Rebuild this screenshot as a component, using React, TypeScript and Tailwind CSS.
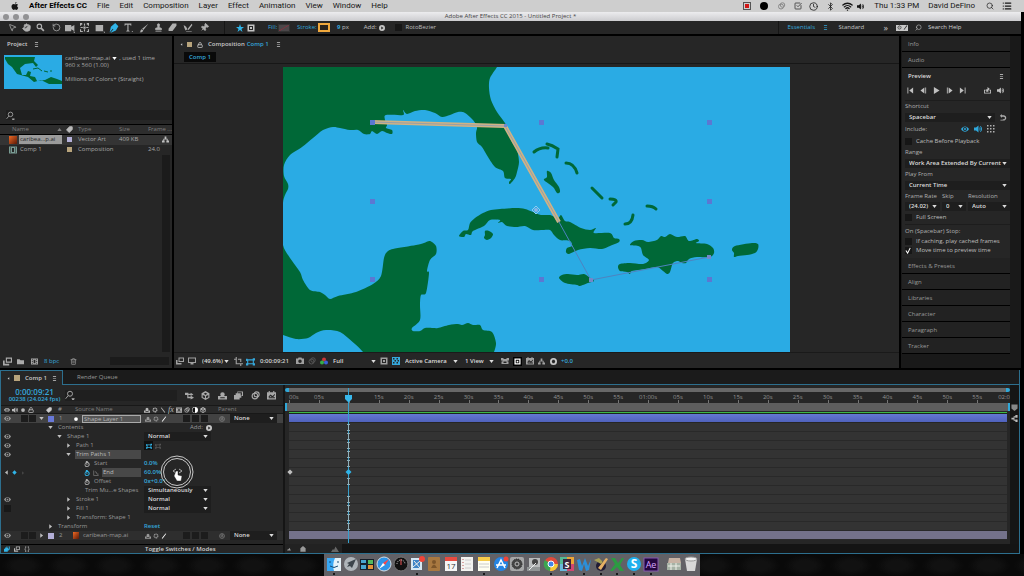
import type { ReactNode } from 'react';
import {
  Bluetooth,
  CheckSquare,
  Clock,
  Hand,
  List,
  Lock,
  MousePointer2,
  Pin,
  RotateCcw,
  Search,
  Stamp,
  Tag,
  Trash2,
  Wifi,
} from 'lucide-react';

type Point = [number, number];

// Closed Catmull-Rom curve through a flat list of coordinates
function curve(coords: number[]) {
  const pts: Point[] = [];
  for (let i = 0; i < coords.length; i += 2) pts.push([coords[i], coords[i + 1]]);
  const n = pts.length;
  let d = `M${pts[0][0]} ${pts[0][1]}`;
  for (let i = 0; i < n; i++) {
    const [a, b, c, e] = [pts[(i + n - 1) % n], pts[i], pts[(i + 1) % n], pts[(i + 2) % n]];
    d += `C${b[0] + (c[0] - a[0]) / 7} ${b[1] + (c[1] - a[1]) / 7} ${c[0] - (e[0] - b[0]) / 7} ${c[1] - (e[1] - b[1]) / 7} ${c[0]} ${c[1]}`;
  }
  return d + 'Z';
}

const mainland = [
  276, 60, 390, 60, 500, 60, 497, 67, 490, 78, 489, 88, 491, 100, 497, 112, 505, 123, 507, 129, 512, 142, 517, 150,
  519, 162, 517, 172, 515, 178, 510, 184, 509, 182, 511, 179, 505, 178, 503, 171, 495, 167, 488, 157, 482, 147, 477, 142,
  476, 133, 477, 127, 473, 120, 465, 113, 458, 112, 450, 115, 442, 117, 435, 113, 425, 110, 415, 111, 407, 114, 403, 110,
  403, 115, 386, 115, 385, 120, 387, 125, 386, 128, 392, 130, 392, 134, 387, 133, 382, 131, 377, 134, 372, 131, 370, 134,
  364, 134, 358, 130, 350, 130, 340, 128, 333, 127, 323, 130, 313, 138, 302, 147, 290, 155, 284, 165, 284, 176, 288, 184,
  288, 189, 285, 195, 283, 203, 283, 225, 283, 245, 290, 258, 300, 272, 303, 280, 310, 290, 320, 292, 325, 295, 330, 299,
  338, 296, 356, 292, 373, 284, 381, 276, 384, 258, 387, 252, 393, 249, 416, 245, 424, 243, 430, 241, 436, 246, 436, 254,
  430, 260, 427, 271, 429, 273, 426, 293, 421, 295, 420, 305, 420, 320, 412, 328, 413, 331, 420, 331, 425, 328, 433, 328,
  438, 328, 449, 325, 458, 324, 462, 325, 468, 323, 473, 325, 480, 325, 483, 330, 492, 332, 496, 343, 494, 352, 490, 360,
  440, 362, 372, 362, 363, 352, 355, 344, 340, 332, 326, 330, 316, 333, 308, 338, 296, 339, 283, 335, 272, 330, 270, 200,
];

const islands = [
  // Cuba
  [459, 236, 463, 231, 468, 230, 470, 223, 475, 218, 483, 213, 491, 210, 500, 209, 516, 208, 525, 209, 533, 212, 541, 215, 550, 215, 558, 218, 561, 215, 565, 221, 570, 222, 581, 228, 590, 230, 596, 228, 594, 233, 610, 233, 614, 238, 619, 239, 619, 242, 610, 246, 602, 249, 590, 248, 578, 250, 569, 254, 566, 252, 567, 248, 572, 246, 570, 241, 560, 240, 554, 235, 550, 230, 541, 230, 533, 230, 525, 226, 516, 227, 507, 226, 502, 222, 498, 223, 500, 220, 490, 220, 484, 226, 473, 231, 471, 235, 466, 234, 464, 237],
  [485, 231, 489, 231, 493, 234, 491, 238, 487, 240, 484, 238, 485, 235],
  // Jamaica
  [559, 278, 562, 275, 568, 274, 577, 275, 584, 274, 589, 277, 594, 281, 588, 283, 580, 286, 577, 285, 565, 283],
  // Hispaniola
  [630, 245, 634, 241, 642, 240, 648, 242, 657, 240, 661, 236, 665, 237, 670, 234, 677, 237, 685, 236, 689, 241, 697, 239, 699, 241, 696, 243, 707, 244, 713, 248, 714, 253, 710, 257, 697, 257, 689, 259, 686, 263, 682, 263, 678, 261, 673, 263, 670, 272, 667, 274, 663, 271, 657, 267, 645, 269, 632, 271, 630, 274, 627, 272, 620, 271, 618, 267, 620, 264, 630, 263, 643, 264, 649, 260, 643, 255, 641, 248, 638, 246],
  // Puerto Rico
  [732, 250, 735, 246, 752, 243, 758, 244, 758, 249, 755, 253, 747, 255, 738, 256, 734, 257, 734, 253],
  // Andros
  [544, 180, 547, 177, 547, 171, 551, 173, 554, 180, 559, 187, 560, 192, 557, 193, 553, 187],
];

const cays = [
  'M534 152Q540 147 548 148',
  'M547 144Q552 145 558 149L557 157',
  'M566 163Q574 163 577 173',
  'M592 188Q597 193 602 198',
  'M610 199Q617 199 616 202L613 205',
  'M625 224Q632 224 633 215',
  'M647 206Q653 206 656 209',
];

const handles: Point[] = [
  [372, 122], [541, 122], [709, 122], [372, 201], [709, 201], [372, 279], [541, 279], [709, 279],
];

function CaribbeanMap() {
  return (
    <svg viewBox="283 67 507 285" className="h-[285px] w-[507px]" role="img" aria-label="Caribbean map">
      <rect x="283" y="67" width="507" height="285" fill="#2aabe4" />
      <g fill="#006837">
        <path d={curve(mainland)} />
        {islands.map((c, i) => <path key={i} d={curve(c)} />)}
      </g>
      <g fill="none" stroke="#006837" strokeWidth="3" strokeLinecap="round">
        {cays.map(d => <path key={d} d={d} />)}
      </g>
      <path d="M559 222L591 280L709 257" fill="none" stroke="#4e83c0" />
      <path d="M372 122L505 126L559 222" fill="none" stroke="#cfb285" strokeWidth="4" />
      <path d="M372 122L505 126L559 222" fill="none" stroke="#96a0a8" />
      <path d="M536 206l4 4-4 4-4-4z" fill="none" stroke="#8cc8f0" />
      <circle cx="536" cy="210" r="2" fill="#8cb4e6" />
      {handles.map(([x, y]) => <rect key={`${x}-${y}`} x={x - 2} y={y - 2} width="5" height="5" fill="#5b78d2" />)}
      <g fill="#7487c8"><rect x="504" y="124" width="3" height="3" /><rect x="589" y="278" width="4" height="4" /><rect x="707" y="255" width="4" height="4" /></g>
    </svg>
  );
}

const shapes: Record<string, ReactNode> = {
  apple: <path d="M11 0c0 2-1.500 3.300-3 3.300C8 1.600 9.300.300 11 0zM8 4.500c1 0 1.600-.7 3-.7 1.300 0 2.300.7 3 1.700-2.500 1.500-2 4.800.5 5.800-.8 2-2 4.500-3.500 4.500-1.200 0-1.500-.7-3-.7s-1.900.7-3 .7C3.300 15.800 1 12 1 9c0-3 2-5.200 4-5.200 1.300 0 2.200.7 3 .7z" />,
  zoom: <><circle cx="6" cy="6" r="4" fill="none" stroke="currentColor" strokeWidth="2" /><path d="M9 9l5 5" stroke="currentColor" strokeWidth="3" /></>,
  camera: <path d="M0 3h10v3l5-3v10l-5-3v3H0zM12 14h4v2z" />,
  pan: <path d="M6 6h4v4H6zM0 0h4v3H2v2H0zM12 0h4v5h-2V3h-2zM0 11h2v3h3v2H0zM14 11h2v5h-4v-2h2zM7 1h2v4H7zM7 11h2v4H7zM1 7h4v2H1zM11 7h4v2h-4z" />,
  rect: <path d="M1 3h12v10H1zM13 14h3v2z" />,
  pen: <path d="M10 0l5 5-4 7-9 4 5-6-1-1-5 6 2-9z" />,
  text: <path d="M1 1h12v4h-1l-1-2H8v10l2 1v1H4v-1l2-1V3H3L2 5H1zM13 14h3v2z" />,
  brush: <path d="M15 1L7 11 5 9zM4 10l3 2c-1 3-4 3-6 3 2-1 1-4 3-5z" />,
  eraser: <path d="M8 1h7v4l-7 9H1v-4z" />,
  roto: <path d="M1 3l4 3 2 4-3 2-2-5zM14 1l1 2-6 8-2-1zM5 13h9v1H5z" />,
  star: <path d="M8 0l2 6h6l-5 4 2 6-5-4-5 4 2-6-5-4h6z" />,
  boxed: <path fillRule="evenodd" d="M1 1h14v14H1zM4 4v8h8V4zM6 6h4v4H6z" />,
  plus: <path fillRule="evenodd" d="M8 0a8 8 0 100 16A8 8 0 008 0zM6 4l6 4-6 4z" />,
  menu: <path d="M3 1h10v2H3zM3 7h10v2H3zM3 13h10v2H3z" />,
  down: <path d="M1 3h14L8 13z" />,
  right: <path d="M4 1l9 7-9 7z" />,
  left: <path d="M12 1L3 8l9 7z" />,
  first: <path d="M1 1h2v14H1zM14 1v14L5 8z" />,
  prev: <path d="M10 1v14L1 8zM12 1h2v14h-2z" />,
  play: <path d="M2 0l13 8-13 8z" />,
  next: <path d="M2 1h2v14H2zM6 1l9 7-9 7z" />,
  last: <path d="M13 1h2v14h-2zM2 1l9 7-9 7z" />,
  share: <path d="M0 6h4v2H2v5h12V8h-2V6h4v9H0zM5 5h3V0l5 4-3 4v3H5z" />,
  speaker: <path d="M0 5h4l5-4v14l-5-4H0zM11 4c3 2 3 6 0 8V9V7zM13 2c4 3 4 9 0 12l-1-1c3-3 3-7 0-10z" />,
  eye: <path fillRule="evenodd" d="M0 8c4-7 12-7 16 0-4 7-12 7-16 0zM8 4a4 4 0 100 8 4 4 0 000-8zM8 6a2 2 0 110 4 2 2 0 010-4z" />,
  grid: <path d="M0 0h3v3H0zM6 0h3v3H6zM12 0h3v3h-3zM0 6h3v3H0zM6 6h3v3H6zM12 6h3v3h-3zM0 12h3v3H0zM6 12h3v3H6zM12 12h3v3h-3z" />,
  undo: <path d="M4 0v3h5a6 6 0 11-4 11l2-2a3 3 0 102-6H4v3L0 4zM1 13h7v2H1z" />,
  find: <><circle cx="8" cy="6" r="4" fill="none" stroke="currentColor" strokeWidth="1.500" /><path d="M5 9l-4 5M11 14h4l-2 2z" stroke="currentColor" strokeWidth="1.500" /></>,
  tree: <path d="M6 1h4v5h3v4h3v5h-6v-5h1V8H5v2h1v5H0v-5h3V6h3z" />,
  flow: <path d="M0 3h6v2h4V3l5 3-5 3V7H6v3h4V8l6 4-6 3v-2H4V7H0z" />,
  film: <path fillRule="evenodd" d="M0 1h16v14H0zM2 3v2h2V3zM2 7v2h2V7zM2 11v2h2v-2zM12 3v2h2V3zM12 7v2h2V7zM12 11v2h2v-2zM6 4v8h4V4z" />,
  folder: <path d="M0 3h6l2 2h8v9H0z" />,
  stack: <path fillRule="evenodd" d="M5 1h11v9H5zM7 3v5h7V3zM0 6h3v6h8v3H0z" />,
  layers: <path d="M6 1h10v8h-3v3h-3v3H0V7h3V4h3zM7 2v2h5v4h2V2z" fillRule="evenodd" />,
  screen: <path fillRule="evenodd" d="M0 1h16v11h-5v3H5v-3H0zM2 3v7h12V3z" />,
  crop: <path d="M3 0h2v11h11v2h-3v3h-2v-3H3V5H0V3h3zM7 3h6v6h-2V5H7z" />,
  mask: <path d="M0 3h3v1h9V2h4v4h-2v5h2v4h-4v-2H4v2H0v-4h2V7H0zM4 6v5h8V6z" fillRule="evenodd" />,
  snap: <path fillRule="evenodd" d="M0 3h4l1-2h6l1 2h4v11H0zM8 5a3 3 0 100 7 3 3 0 000-7z" />,
  checker: <path d="M0 0h16v16H0zM2 2v3h3V2zM9 2v3h3V2zM5 6v3h3V6zM11 6v3h3V6zM2 10v3h3v-3zM9 10v3h3v-3z" fillRule="evenodd" />,
  shy: <path d="M4 6a4 4 0 118 0l-1 3h5v6H0V9h5zM4 11v2h8v-2z" fillRule="evenodd" />,
  cube: <path fillRule="evenodd" d="M8 0l7 4v8l-7 4-7-4V4zM8 3L5 5l3 2 3-2zM3 7v4l4 2V9zM13 7v4l-4 2V9z" />,
  rings: <><circle cx="10" cy="6" r="4.500" fill="none" stroke="currentColor" strokeWidth="2" /><circle cx="7" cy="9" r="5" fill="none" stroke="currentColor" strokeWidth="2" /></>,
  graph: <path fillRule="evenodd" d="M0 2h3V0h2v2h6V0h2v2h3v13H0zM2 11l4-5 4 3 4-4v2l-4 5-4-3-3 4h11v-2H2z" />,
  view: <path d="M0 2h5v2h6V2h5v5h-3v2h2v5H1V9h2V7H0zM5 9v3h6V9z" fillRule="evenodd" />,
  gear: <><circle cx="8" cy="8" r="5" fill="none" stroke="currentColor" strokeWidth="3" strokeDasharray="3 1" /><circle cx="8" cy="8" r="1" /></>,
  shutter: <path fillRule="evenodd" d="M8 0a8 8 0 100 16A8 8 0 008 0zM6 4h4l2 4-2 4H6L4 8z" />,
  slash: <path d="M12 1l2 1L4 15l-2-1z" />,
  backslash: <path d="M2 2l2-1 10 13-2 1z" />,
  dot: <circle cx="8" cy="8" r="5" />,
  half: <><circle cx="8" cy="8" r="8" fill="#fff" /><path d="M8 1a7 7 0 000 14z" fill="#111" /></>,
  spiral: <><circle cx="8" cy="8" r="6.500" fill="none" stroke="currentColor" strokeWidth="1.500" /><path d="M8 8c0-2 4-1 3 1s-6 2-6-1 3-4 6-3" fill="none" stroke="currentColor" strokeWidth="1.500" /></>,
  watch: <path fillRule="evenodd" d="M5 0h5v2l4 3c3 6 0 11-6 11S0 10 3 5l2-2zM8 5a4 4 0 100 9 4 4 0 000-9zM5 6l4 2v3L7 10z" />,
  linegraph: <path d="M1 1h2v12h12v2H1zM5 4h3l4 6h3v2h-4L7 6H5z" />,
  diamond: <path d="M8 1l7 7-7 7-7-7z" />,
  brackets: <path fillRule="evenodd" d="M6 1v3H4v8h2v3H3V9H1V7h2V1zM10 1h3v6h2v2h-2v6h-3v-3h2V4h-2z" />,
  hill: <path d="M0 14l4-6 2 2 3-7 7 11z" />,
  marker: <path d="M1 1h14v9l-7 6-7-6z" />,
};

function Glyph({ name, className = 'size-2' }: { name: string; className?: string }) {
  return (
    <svg viewBox="0 0 16 16" fill="currentColor" className={`shrink-0 ${className}`} aria-hidden="true">
      {shapes[name]}
    </svg>
  );
}

function Drop({ label, value, className = '' }: { label: string; value: string; className?: string }) {
  return (
    <span className={`flex h-[9px] items-center bg-[#1e1e1e] pr-[3px] text-[#dcdcdc] ${className}`}>
      <select aria-label={label} className="h-[9px] min-w-0 flex-1 appearance-none bg-transparent p-0 pl-1 leading-[9px] font-semibold outline-none">
        <option>{value}</option>
      </select>
      <Glyph name="down" className="size-[5px]" />
    </span>
  );
}

function Check({ label, checked = false }: { label: string; checked?: boolean }) {
  return (
    <label className="flex items-center gap-1 text-[#bebebe]">
      <input type="checkbox" defaultChecked={checked} className="peer sr-only" />
      <span className="flex size-[7px] items-center justify-center bg-[#161616] text-white">
        {checked && <svg viewBox="0 0 8 8" className="size-[7px]"><path d="M1 4l2 3 3-6" fill="none" stroke="currentColor" strokeWidth="1.200" /></svg>}
      </span>
      {label}
    </label>
  );
}

const menus = ['File', 'Edit', 'Composition', 'Layer', 'Effect', 'Animation', 'View', 'Window', 'Help'];

function MenuBar() {
  return (
    <header className="flex h-3 items-center bg-[#cecece] pr-3 pl-[11px] font-['Roboto',sans-serif] text-[8px] leading-3 text-[#161616]">
      <Glyph name="apple" className="size-2" />
      <nav className="ml-[10px] flex gap-[10px]">
        <button className="font-bold text-black">After Effects CC</button>
        {menus.map(m => <button key={m}>{m}</button>)}
      </nav>
      <div className="ml-auto flex items-center">
        <span className="mr-[9px] flex size-2 items-center justify-center border border-[#555]"><i className="size-1 bg-[#d01818]" /></span>
        <span className="mr-[9px] size-2 rounded-full bg-black" />
        <Glyph name="rings" className="mr-2 h-2 w-[9px] text-[#888]" />
        <CheckSquare className="mr-[7px] size-2" />
        <Clock className="mr-2 size-[9px]" />
        <Bluetooth className="mr-[7px] size-[9px]" />
        <Wifi className="mr-1 size-[11px]" strokeWidth={3} />
        <Glyph name="speaker" className="mr-[10px] size-[7px]" />
        <span className="mr-[9px]">Thu 1:33 PM</span>
        <span className="mr-[11px]">David DeFino</span>
        <Search className="mr-2 size-2" />
        <List className="size-[10px]" strokeWidth={3} />
      </div>
    </header>
  );
}

function Tool({ children, label, active = false }: { children: ReactNode; label: string; active?: boolean }) {
  return <button aria-label={label} className={`flex w-[14px] justify-center ${active ? 'text-[#30b4e8]' : 'text-[#b0b0b0]'}`}>{children}</button>;
}

function Toolbar() {
  return (
    <div className="flex h-[15px] items-center border-b-2 border-black bg-[#262626] pl-[5px] text-[#c4c4c4]">
      <Tool label="Selection"><MousePointer2 className="size-[9px]" /></Tool>
      <Tool label="Hand"><Hand className="size-[9px]" fill="currentColor" /></Tool>
      <Tool label="Zoom"><Glyph name="zoom" className="size-[9px]" /></Tool>
      <span className="w-[2px]" />
      <Tool label="Rotation"><RotateCcw className="size-[9px]" /></Tool>
      <Tool label="Camera"><Glyph name="camera" className="size-[10px]" /></Tool>
      <Tool label="Pan Behind"><Glyph name="pan" className="size-[9px]" /></Tool>
      <span className="w-[2px]" />
      <Tool label="Rectangle"><Glyph name="rect" className="size-[10px]" /></Tool>
      <Tool label="Pen" active><Glyph name="pen" className="size-[10px]" /></Tool>
      <Tool label="Type"><Glyph name="text" className="size-[9px]" /></Tool>
      <span className="w-[2px]" />
      <Tool label="Brush"><Glyph name="brush" className="size-[10px]" /></Tool>
      <Tool label="Clone Stamp"><Stamp className="size-[9px]" fill="currentColor" /></Tool>
      <Tool label="Eraser"><Glyph name="eraser" className="size-[9px]" /></Tool>
      <span className="w-[2px]" />
      <Tool label="Roto Brush"><Glyph name="roto" className="size-[10px]" /></Tool>
      <span className="w-[2px]" />
      <Tool label="Puppet Pin"><Pin className="size-[9px] rotate-45" fill="currentColor" /></Tool>
      <span className="ml-[13px] h-[13px] w-px bg-[#161616]" />
      <Glyph name="star" className="ml-[11px] size-2 text-[#30b4e8]" />
      <Glyph name="boxed" className="ml-[3px] size-2" />
      <span className="ml-[13px] w-[10px] text-[#35a8dc]">Fill:</span>
      <button aria-label="Fill colour" className="h-2 w-3 border border-[#333] bg-[#4b4749]"><svg viewBox="0 0 10 6" className="size-full"><path d="M0 6L10 0" stroke="#7e3540" /></svg></button>
      <span className="ml-[7px] w-[21px] text-[#35a8dc]">Stroke:</span>
      <button aria-label="Stroke colour" className="h-[9px] w-3 border-2 border-[#f0a83c] bg-[#2b241c]" />
      <span className="ml-[7px]"><b className="text-[#35a8dc]">9</b> px</span>
      <span className="ml-[15px]">Add:</span>
      <Glyph name="plus" className="ml-[2px] size-[6px]" />
      <span className="ml-[10px]"><Check label="RotoBezier" /></span>
      <div className="ml-auto flex h-full items-center border-l border-[#161616] pl-[9px]">
        <button className="w-[35px] text-left text-[#35a8dc]">Essentials</button>
        <Glyph name="menu" className="size-[5px] text-[#35a8dc]" />
        <button className="ml-[11px] w-[45px] text-left">Standard</button>
        <span className="text-[9px] leading-[9px]">»</span>
        <span className="ml-2 flex h-[6px] w-3 items-center justify-center gap-px bg-[#c8c8c8] text-[#222]"><Glyph name="gear" className="size-[5px]" /><Glyph name="slash" className="size-[5px]" /></span>
        <Search className="ml-[7px] size-[7px] -scale-x-100" />
        <input aria-label="Search Help" placeholder="Search Help" className="ml-[6px] w-[93px] bg-transparent placeholder:text-[#d0d0d0]" />
      </div>
    </div>
  );
}

function ProjectPanel() {
  return (
    <section className="flex w-[172px] shrink-0 flex-col bg-[#262626] text-[#a8a8a8]">
      <h2 className="flex h-4 items-center gap-[7px] pt-px pl-[7px] font-semibold text-[#cccccc]">Project <Glyph name="menu" className="size-[5px]" /></h2>
      <div className="flex h-[58px] gap-[3px] pt-[3px] pl-1">
        <svg viewBox="0 0 58 34" className="h-[34px] w-[58px]">
          <rect width="58" height="34" fill="#2aabe4" />
          <path d="M1 2H31L30 6L34 10L32 12L29 8L21 9L16 13L18 20L22 20L24 16L27 17L26 21L31 22L33 26L41 25L47 22L53 24L58 26V29H45L37 25L30 27L24 22L13 19L8 12L4 9L1 4Z" fill="#006837" />
          <path d="M29 14L34 13L38 16M40 16L44 17M46 16h2" fill="none" stroke="#006837" />
        </svg>
        <div className="leading-[7px]">
          <p className="flex items-center gap-[2px] font-medium"><span>caribean-map.ai</span> <Glyph name="down" className="size-[5px] text-white" /> <span>, used 1 time</span></p>
          <p>960 x 560 (1.00)</p>
          <p className="mt-[7px]">Millions of Colors+ (Straight)</p>
        </div>
      </div>
      <label className="ml-[6px] flex h-[10px] items-center bg-[#1f1f1f]">
        <Glyph name="find" className="size-[9px]" />
        <input aria-label="Search project" className="w-[140px] bg-transparent" />
      </label>
      <table className="mt-1 w-full table-fixed border-t border-black text-left">
        <thead>
          <tr className="h-[10px] border-b border-black bg-[#2d2d2d] text-[#7e7e7e]">
            <th className="w-[66px] p-0 pl-3 font-normal"><span className="flex items-center justify-between pr-1">Name <Glyph name="down" className="size-[5px] rotate-180" /></span></th>
            <th className="w-3 p-0"><Tag className="size-[7px] -scale-x-100 text-[#bbb]" fill="currentColor" /></th>
            <th className="w-[41px] p-0 font-normal">Type</th>
            <th className="w-[29px] p-0 font-normal">Size</th>
            <th className="p-0 font-normal whitespace-nowrap">Frame ...</th>
          </tr>
        </thead>
        <tbody>
          <tr className="h-[10px] bg-[#343434]">
            <td className="p-0 pl-[9px]"><span className="flex items-center gap-[2px]"><i className="size-2 bg-linear-to-br from-[#f06a24] to-[#5c1a08]" /><span className="w-[43px] bg-[#9b9b9b] pl-px text-[#262626]">caribea...p.ai</span></span></td>
            <td className="p-0"><i className="ml-px block size-[5px] bg-[#b4b0d8]" /></td>
            <td className="p-0">Vector Art</td>
            <td className="p-0">409 KB</td>
            <td className="p-0"><Glyph name="tree" className="ml-[14px] size-[7px] text-[#c0c0c0]" /></td>
          </tr>
          <tr className="h-[10px]">
            <td className="p-0 pl-[9px]"><span className="flex items-center gap-[3px]"><Glyph name="film" className="size-2 text-[#789a92]" />Comp 1</span></td>
            <td className="p-0"><i className="ml-px block size-[5px] bg-[#b8a47c]" /></td>
            <td className="p-0">Composition</td>
            <td className="p-0" />
            <td className="p-0">24.0</td>
          </tr>
        </tbody>
      </table>
      <div className="mr-[2px] flex-1 self-stretch"><div className="ml-auto h-full w-2 bg-[#1b1b1b]" /></div>
      <div className="flex h-4 items-center gap-[5px] pt-[2px] pl-[3px] text-[#aaa]">
        <Glyph name="stack" className="size-[9px]" /><Glyph name="folder" className="size-[7px]" /><Glyph name="film" className="ml-px h-[7px] w-[9px]" />
        <button className="text-[#35a8dc]">8 bpc</button>
        <button aria-label="Delete" className="ml-[6px]"><Trash2 className="size-[7px]" /></button>
        <div className="mr-[3px] ml-[28px] h-2 flex-1 bg-[#1b1b1b]" />
      </div>
    </section>
  );
}

function CompositionPanel() {
  return (
    <section className="flex min-w-0 flex-1 flex-col border-x-2 border-black bg-[#262626] text-[#c8c8c8]">
      <h2 className="flex h-4 items-center pt-px pl-[6px] font-semibold">
        <Glyph name="left" className="size-[3px]" />
        <i className="ml-1 size-[5px] bg-[#b8a47c]" />
        <Lock className="ml-[5px] size-[6px]" strokeWidth={3} />
        <span className="ml-[5px]">Composition</span>
        <span className="ml-[2px] text-[#35a8dc]">Comp 1</span>
        <Glyph name="menu" className="ml-[7px] size-[5px]" />
      </h2>
      <div className="flex h-3 items-start border-b border-[#171717] pl-[10px]">
        <button className="h-[10px] w-8 bg-[#090909] font-semibold text-[#35a8dc]">Comp 1</button>
      </div>
      <div className="flex flex-1 items-start justify-center pt-[3px]"><CaribbeanMap /></div>
      <div className="flex h-4 items-center border-t border-[#1a1a1a] pt-px pl-[2px] text-[#a0a0a0]">
        <Glyph name="stack" /><Glyph name="screen" className="ml-1 size-2" />
        <Drop label="Magnification" value="(49.6%)" className="ml-[2px] w-[34px] bg-transparent!" />
        <Glyph name="crop" className="ml-[2px] size-[9px]" />
        <Glyph name="mask" className="ml-[3px] size-[9px] text-[#35a8dc]" />
        <span className="ml-[5px] w-9 font-semibold text-[#d0d0d0]">0:00:09:21</span>
        <Glyph name="snap" className="size-2" /><Glyph name="rings" className="ml-1 size-2 text-[#555]" />
        <svg viewBox="0 0 16 16" className="ml-1 size-2"><circle cx="8" cy="5" r="4" fill="#c83838" /><circle cx="4" cy="11" r="4" fill="#36ad48" /><circle cx="12" cy="11" r="4" fill="#3b61d8" /></svg>
        <Drop label="Resolution" value="Full" className="ml-px w-[50px] bg-transparent!" />
        <Glyph name="boxed" className="ml-px size-2" /><Glyph name="checker" className="ml-1 size-2 text-[#35a8dc]" />
        <Drop label="3D view" value="Active Camera" className="ml-px w-[60px] bg-transparent!" />
        <Drop label="View layout" value="1 View" className="w-9 bg-transparent!" />
        <div className="ml-1 flex items-center gap-1">
          <Glyph name="view" /><span className="flex size-[9px] items-center justify-center bg-black text-white"><Glyph name="boxed" className="size-[7px]" /></span>
          <Glyph name="graph" className="size-2" /><Glyph name="tree" className="size-[7px]" /><Glyph name="shutter" className="ml-px size-[7px] text-[#c8c8c8]" />
          <span className="font-semibold text-[#35a8dc]">+0.0</span>
        </div>
      </div>
    </section>
  );
}

function Tab({ children }: { children: ReactNode }) {
  return <button className="block h-4 w-full border-b border-black bg-[#222] pt-px pl-[6px] text-left text-[#9a9a9a]">{children}</button>;
}

function SidePanel() {
  return (
    <aside className="flex w-[120px] shrink-0 bg-[#191919] pl-px">
      <div className="w-[108px]">
        <Tab>Info</Tab>
        <Tab>Audio</Tab>
        <div className="bg-[#262626] pl-[3px] text-[#b0b0b0]">
          <h2 className="flex h-4 items-center justify-between pr-[6px] pl-[3px] font-semibold text-[#dcdcdc]">Preview <Glyph name="menu" className="size-[5px]" /></h2>
          <div className="flex h-[17px] items-start gap-[6px] border-b border-[#1d1d1d] pt-[3px] pl-[2px] text-[#c0c0c0]">
            {['first', 'prev', 'play', 'next', 'last'].map(n => <button key={n} aria-label={n}><Glyph name={n} className="size-[7px]" /></button>)}
            <button aria-label="Loop" className="ml-3"><Glyph name="share" className="size-[7px]" /></button>
            <button aria-label="Mute"><Glyph name="speaker" className="size-[7px]" /></button>
          </div>
          <div className="h-[11px] pt-px">Shortcut</div>
          <div className="flex h-[11px] items-center gap-[5px]"><Drop label="Shortcut" value="Spacebar" className="w-[90px]" /><Glyph name="undo" className="size-[7px]" /></div>
          <div className="flex h-3 items-center">
            <span className="w-[56px]">Include:</span>
            <Glyph name="eye" className="size-2 text-[#2fa8dc]" /><Glyph name="speaker" className="ml-[5px] size-2 text-[#2fa8dc]" /><Glyph name="grid" className="ml-[5px] size-2" />
          </div>
          <div className="flex h-3 items-center"><Check label="Cache Before Playback" /></div>
          <div className="h-[11px] pt-px">Range</div>
          <Drop label="Range" value="Work Area Extended By Current" className="my-px" />
          <div className="h-[11px] pt-px">Play From</div>
          <Drop label="Play From" value="Current Time" className="my-px" />
          <div className="grid grid-cols-[37px_26px_1fr] leading-[10px]"><span>Frame Rate</span><span>Skip</span><span>Resolution</span></div>
          <div className="grid grid-cols-[37px_26px_1fr] py-px">
            <Drop label="Frame Rate" value="(24.02)" className="mr-[2px]" /><Drop label="Skip" value="0" className="mr-[2px]" /><Drop label="Preview resolution" value="Auto" />
          </div>
          <div className="flex h-[10px] items-center"><Check label="Full Screen" /></div>
          <div className="mt-[2px] h-3 border-t border-[#1d1d1d] pt-[2px]">On (Spacebar) Stop:</div>
          <div className="flex h-[10px] items-center"><Check label="If caching, play cached frames" /></div>
          <div className="flex h-3 items-start"><Check label="Move time to preview time" checked /></div>
        </div>
        {['Effects & Presets', 'Align', 'Libraries', 'Character', 'Paragraph', 'Tracker'].map(t => <Tab key={t}>{t}</Tab>)}
      </div>
    </aside>
  );
}

function Arrow({ open }: { open: boolean }) {
  return <button aria-label={open ? 'Collapse' : 'Expand'} className="mr-1 text-[#c0c0c0]"><Glyph name={open ? 'down' : 'right'} className="size-[5px]" /></button>;
}

function Row({ eye, indent, name, value, selected = false, lead }: { eye?: ReactNode; indent: string; name: string; value?: ReactNode; selected?: boolean; lead?: ReactNode }) {
  return (
    <div className="relative flex h-[9px] items-center">
      <span className="flex w-[34px] items-center pl-[3px]">{eye}</span>
      <span className={`flex w-[109px] items-center pr-[3px] ${indent}`}>
        {lead}
        <span className={`pl-px ${selected ? 'flex-1 bg-[#484848] text-[#bcbcbc]' : ''}`}>{name}</span>
      </span>
      <span className="flex flex-1 items-center">{value}</span>
    </div>
  );
}

function Layer({ index, name, color, active = false }: { index: number; name: string; color: string; active?: boolean }) {
  return (
    <div className={`flex h-[9px] items-center ${active ? 'bg-[#424242]' : 'bg-[#2e2e2e]'}`}>
      <span className="flex w-[38px] items-center gap-px pl-[3px]"><Glyph name="eye" className="mr-[9px] size-[7px]" /><i className="size-[7px] bg-[#1c1c1c]" /><i className="size-[7px] bg-[#1c1c1c]" /></span>
      <Arrow open={active} />
      <i className={`mr-[5px] size-[6px] ${color}`} />
      <span className="w-[14px]">{index}</span>
      {active
        ? <><Glyph name="dot" className="mr-[3px] size-[6px] text-white" /><span className="h-2 w-[59px] border border-[#aaa] bg-[#565656] pl-px leading-[6px] text-[#b4b4b4]">{name}</span></>
        : <><i className="mr-[3px] h-[7px] w-[6px] bg-linear-to-br from-[#f06a24] to-[#5c1a08]" /><span className="w-[59px] pl-px">{name}</span></>}
      <span className="ml-1 flex items-center gap-[2px]"><Glyph name="shy" className="size-[6px]" /><Glyph name="gear" className="size-[6px]" /><Glyph name="slash" className="size-[6px] text-white" /></span>
      <span className="ml-[16px] flex gap-[2px]">{[0, 1, 2].map(i => <i key={i} className="size-[7px] bg-[#1c1c1c]" />)}</span>
      <Glyph name="spiral" className="ml-[11px] size-[6px]" />
      <Drop label={`${name} parent`} value="None" className="ml-[5px] w-[47px]" />
    </div>
  );
}

const eyeIcon = <Glyph name="eye" className="size-[7px]" />;
const cyan = 'text-[#35a8dc] font-semibold';

function LayerList() {
  return (
    <div className="w-[284px] shrink-0 border-r-2 border-[#151515] text-[#989898]">
      <div className="flex h-5 items-center pl-[3px]">
        <div className="w-[61px] text-center font-semibold text-[#35a8dc]">
          <div className="text-[8px] leading-[9px]">0:00:09:21</div>
          <div className="leading-[7px]">00238 (24.024 fps)</div>
        </div>
        <label className="flex h-[11px] items-center bg-[#1f1f1f] text-[#aaa]"><Glyph name="find" className="size-[10px]" /><input aria-label="Search layers" className="w-[102px] bg-transparent" /></label>
        <div className="ml-2 flex flex-1 items-center justify-between pr-[7px] text-[#a8a8a8]">
          {['flow', 'cube', 'shy', 'layers', 'rings', 'graph'].map(n => <button key={n} aria-label={n}><Glyph name={n} className="size-[9px]" /></button>)}
        </div>
      </div>
      <div className="flex h-[9px] items-center border-y border-[#181818] bg-[#2a2a2a] pl-[3px]">
        <span className="flex w-[42px] items-center gap-[2px] text-[#b8b8b8]"><Glyph name="eye" className="size-[6px]" /><Glyph name="speaker" className="size-[6px]" /><Glyph name="dot" className="size-[6px]" /><Lock className="size-[6px]" strokeWidth={3} /></span>
        <Tag className="size-[6px] -scale-x-100 text-[#ccc]" fill="currentColor" />
        <span className="ml-[6px] w-[17px]">#</span>
        <span className="w-[69px] text-[#7e7e7e]">Source Name</span>
        <span className="flex w-[74px] items-center gap-[2px] text-[#b8b8b8]">
          <Glyph name="shy" className="size-[6px]" /><Glyph name="gear" className="size-[6px]" /><Glyph name="backslash" className="size-[6px]" /><i className="w-[6px] font-['Liberation_Serif',serif] text-[8px] leading-[7px]">fx</i><Glyph name="film" className="size-[6px]" /><Glyph name="rings" className="size-[6px]" /><Glyph name="half" className="size-[6px]" /><Glyph name="cube" className="size-[6px]" />
        </span>
        <span className="text-[#7e7e7e]">Parent</span>
      </div>
      <Layer index={1} name="Shape Layer 1" color="bg-[#6878d8]" active />
      <Row indent="pl-[13px]" lead={<Arrow open />} name="Contents" value={<span className="ml-[46px] flex items-center gap-[3px]">Add: <Glyph name="plus" className="size-[6px] text-[#c8c8c8]" /></span>} />
      <Row eye={eyeIcon} indent="pl-[22px]" lead={<Arrow open />} name="Shape 1" value={<Drop label="Shape 1 mode" value="Normal" className="w-[67px]" />} />
      <Row eye={eyeIcon} indent="pl-[31px]" lead={<Arrow open={false} />} name="Path 1" value={<><span className="flex size-[9px] items-center justify-center bg-[#101010] text-[#30b4e8]"><Glyph name="mask" className="size-[6px]" /></span><Glyph name="mask" className="ml-[2px] size-[6px] text-[#555]" /></>} />
      <Row eye={eyeIcon} indent="pl-[31px]" lead={<Arrow open />} name="Trim Paths 1" selected />
      <Row indent="pl-[49px]" lead={<Glyph name="watch" className="mr-[3px] size-[6px] text-[#aaa]" />} name="Start" value={<button className={cyan}>0.0%</button>} />
      <Row
        eye={<><Glyph name="left" className="mr-[3px] size-[5px] text-[#bbb]" /><Glyph name="diamond" className="mr-1 size-[5px] text-[#30b4e8]" /><Glyph name="right" className="size-1 text-[#444]" /></>}
        indent="pl-[49px]"
        lead={<><Glyph name="watch" className="mr-[3px] size-[6px] text-[#30b4e8]" /><Glyph name="linegraph" className="mr-[3px] size-[6px] text-[#777]" /></>}
        name="End"
        selected
        value={
          <>
            <button className={cyan}>60.0%</button>
            <svg viewBox="0 0 34 34" className="absolute -top-[13px] left-[159px] z-10 size-[34px]" aria-hidden="true">
              <g fill="none" stroke="#c8c8c8"><circle cx="17" cy="17" r="16" /><circle cx="17" cy="17" r="13.500" /><path d="M16 14l-3 2 3 2M19 14l3 2-3 2" stroke="#aaa" /></g>
              <path d="M16 16h2v4l4 1-1 5h-4l-3-5z" fill="#fff" stroke="#111" strokeWidth=".4" />
            </svg>
          </>
        }
      />
      <Row indent="pl-[49px]" lead={<Glyph name="watch" className="mr-[3px] size-[6px] text-[#aaa]" />} name="Offset" value={<button className={cyan}>0x+0.0°</button>} />
      <Row indent="pl-[49px]" name="Trim Mu...e Shapes" value={<Drop label="Trim Multiple Shapes" value="Simultaneously" className="w-[67px]" />} />
      <Row eye={eyeIcon} indent="pl-[31px]" lead={<Arrow open={false} />} name="Stroke 1" value={<Drop label="Stroke 1 mode" value="Normal" className="w-[67px]" />} />
      <Row eye={<i className="size-[7px] bg-[#181818]" />} indent="pl-[31px]" lead={<Arrow open={false} />} name="Fill 1" value={<Drop label="Fill 1 mode" value="Normal" className="w-[67px]" />} />
      <Row indent="pl-[31px]" lead={<Arrow open={false} />} name="Transform: Shape 1" />
      <Row indent="pl-[13px]" lead={<Arrow open={false} />} name="Transform" value={<button className={cyan}>Reset</button>} />
      <Layer index={2} name="caribean-map.ai" color="bg-[#b4b0d8]" />
      <div className="mt-1 flex h-[9px] items-center border-t border-black pl-[3px]">
        <span className="flex w-[141px] gap-1 text-[#b8b8b8]"><Glyph name="layers" className="size-[6px] text-[#30b4e8]" /><Glyph name="stack" className="size-[6px]" /><Glyph name="brackets" className="size-[6px]" /></span>
        <button className="font-semibold text-[#d0d0d0]">Toggle Switches / Modes</button>
      </div>
    </div>
  );
}

const ticks = Array.from({ length: 24 }, (_, i) => {
  const s = String((i % 12) * 5).padStart(2, '0');
  return i === 12 ? '01:00s' : `${s}s`;
});

// Rows of the layer list that carry an I-beam at the playhead
const beamRows = [1, 2, 3, 4, 5, 7, 9, 10, 11, 12];

function TimeGraph() {
  return (
    <div className="flex min-w-0 flex-1 flex-col">
      <div className="flex flex-1">
        <div className="relative min-w-0 flex-1 overflow-hidden bg-[#262626]">
          <div className="mt-[3px] h-1 rounded-sm border-x-4 border-[#30a8d8] bg-[#686868]" />
          <div className="mr-[3px] ml-1 flex h-[11px] text-[#929292]">
            {ticks.map((t, i) => (
              <div key={i} className="relative flex-1">
                <span className={`absolute top-px ${i === 0 ? 'left-0' : '-left-4 w-8 text-center'}`}>{i === 2 ? '' : t}</span>
                <i className="absolute bottom-0 left-0 h-[3px] w-px bg-[#777]" />
              </div>
            ))}
          </div>
          <span className="absolute top-[8px] right-0 text-[#929292]">02:0</span>
          <div className="h-2 border-x-2 border-[#30a8d8] bg-[#5e5e5e]" />
          <div className="mt-px mr-[3px] ml-1 h-[2px] border-b border-[#182a1a] bg-[#3cb848]" />
          <div className="mr-[3px] ml-1 bg-[#333]">
            <div className="h-[9px] border-b border-[#262626] bg-linear-to-b from-[#6478d4] to-[#5062bc]" />
            {Array.from({ length: 12 }, (_, i) => <div key={i} className="h-[9px] border-b border-[#292929]" />)}
            <div className="h-[9px] border-b border-[#292929] bg-[#74728a]" />
          </div>
          <div className="absolute inset-y-0 right-[3px] left-1">
            <svg viewBox="0 0 9 158" className="absolute top-0 left-[8.26%] h-[158px] w-[9px] -translate-x-1" aria-hidden="true">
              <path d="M4.500 3V158" stroke="#36a0cc" />
              <path d="M1 10h7v4l-3 3h-1l-3-3z" fill="#38b8ec" />
              <g fill="none" stroke="#8fb0bb">{beamRows.map(r => <path key={r} d={`M3 ${r * 9 + 30.5}h3M3 ${r * 9 + 36.5}h3M4.500 ${r * 9 + 30.5}v6`} />)}</g>
              <path d="M4.500 84l3 3-3 3-3-3z" fill="#30b4e8" />
            </svg>
            <Glyph name="diamond" className="absolute top-[84px] -left-[2px] size-[6px] text-[#c0c0c0]" />
          </div>
        </div>
        <div className="flex w-[9px] flex-col items-center gap-1 bg-[#151515] pt-[19px] text-[#888]"><Glyph name="marker" className="size-[7px]" /><Glyph name="tree" className="size-[7px] -rotate-90 text-[#bbb]" /></div>
      </div>
      <div className="flex h-[9px] items-center gap-2 bg-[#141414] text-[#999]">
        <div className="flex h-full w-[57px] items-center gap-[9px] bg-[#222] pl-[2px]"><Glyph name="hill" className="size-1" /><Glyph name="marker" className="size-[6px] rotate-180" /><Glyph name="hill" className="ml-4 size-2 text-[#666]" /></div>
      </div>
    </div>
  );
}

function Timeline() {
  return (
    <section className="mr-1 border-x border-b border-[#2d6f8e] bg-[#262626]">
      <div className="flex h-[15px] bg-[#1b1b1b]">
        <button className="flex w-[62px] items-center border-t border-r border-[#2d6f8e] bg-[#262626] pl-[6px] font-semibold text-[#cccccc]">
          <Glyph name="left" className="size-[3px]" /><i className="ml-1 size-[6px] bg-[#b8a47c]" /><span className="ml-[5px]">Comp 1</span><Glyph name="menu" className="ml-[5px] size-[5px]" />
        </button>
        <button className="flex-1 border-b border-[#2d6f8e] pl-[14px] text-left text-[#999]">Render Queue</button>
      </div>
      <div className="flex"><LayerList /><TimeGraph /></div>
    </section>
  );
}

const dock: { name: string; art: ReactNode; running?: boolean }[] = [
  { name: 'Finder', running: true, art: <><rect x="1" y="2" width="14" height="13" fill="#e5f2f9" /><path d="M1 2h8q-3 6-1 13H1z" fill="#37a7f4" /><path d="M4 5v2M12 5v2M4 10q4 3 8 0" fill="none" stroke="#164b74" /></> },
  { name: 'Launchpad', art: <><circle cx="8" cy="8" r="7" fill="#aeb4b9" /><path d="M13 3L9 12 7 10 4 11 6 8 4 7z" fill="#3d454c" /></> },
  { name: 'Mission Control', art: <><rect x="1" y="3" width="14" height="11" fill="#171f29" /><path d="M2 4h5v3H2zM2 9h5v4H2z" fill="#49a5cf" /><path d="M9 4h5v4H9z" fill="#53b95d" /><path d="M9 9h5v4H9z" fill="#e29236" /></> },
  { name: 'Safari', art: <><circle cx="8" cy="8" r="7" fill="#2d94e8" stroke="#d4dde3" /><path d="M13 3L9 9 7 7z" fill="#f44" /><path d="M3 13l4-6 2 2z" fill="#fff" /></> },
  { name: 'Dashboard', art: <><circle cx="8" cy="8" r="7" fill="#111" stroke="#777" /><path d="M8 9V3" stroke="#e55" /><path d="M4 8a4 4 0 018 0" fill="none" stroke="#ccc" strokeDasharray="1 1" /></> },
  { name: 'Mail', running: true, art: <><path d="M2 2h11v12H2z" fill="#d6e8f4" /><path d="M4 4h7v8H4z" fill="#3d84c6" /><path d="M4 11l7-6M5 5l6 7" stroke="#eee" /><circle cx="13" cy="3" r="3" fill="#f04438" /></> },
  { name: 'Contacts', art: <><rect x="2" y="1" width="12" height="14" rx="1" fill="#a87840" /><circle cx="8" cy="6" r="2" fill="#7c552a" /><path d="M5 12q3-7 6 0z" fill="#7c552a" /></> },
  { name: 'Calendar', art: <><rect x="2" y="1" width="12" height="14" fill="#f5f5f5" /><path d="M2 1h12v4H2z" fill="#e84b40" /><text x="8" y="13" textAnchor="middle" fontSize="8" fill="#333">17</text></> },
  { name: 'Reminders', art: <><rect x="2" y="1" width="12" height="14" fill="#f3f3f0" /><path d="M4 3v10" stroke="#b55" strokeDasharray="1 2" /><path d="M6 4h6M6 8h6M6 12h6" stroke="#ccc" /></> },
  { name: 'Notes', running: true, art: <><rect x="2" y="1" width="12" height="14" fill="#fffef0" /><path d="M2 1h12v4H2z" fill="#f6cb4a" /><path d="M3 8h10M3 11h10" stroke="#ccc" /></> },
  { name: 'App Store', art: <><circle cx="8" cy="8" r="7" fill="#2484e4" /><path d="M4 12l4-8 4 8M3 9h10" fill="none" stroke="#fff" strokeWidth="1.500" /><circle cx="13" cy="3" r="2.500" fill="#f04438" /></> },
  { name: 'System Preferences', art: <><rect x="1" y="1" width="14" height="14" rx="2" fill="#a6a7a8" /><circle cx="8" cy="8" r="5" fill="#444" stroke="#222" strokeDasharray="1 1" /><circle cx="8" cy="8" r="2" fill="none" stroke="#bbb" /></> },
  { name: 'Disk Utility', art: <><rect x="3" y="2" width="11" height="9" fill="#b9bbbc" /><path d="M1 11h13v4H1z" fill="#919596" /><circle cx="9" cy="6" r="3" fill="#444" /><path d="M3 14l7-7" stroke="#eee" /></> },
  { name: 'Chrome', running: true, art: <><circle cx="8" cy="8" r="7" fill="#e04b3c" /><path d="M8 8L2 4a7 7 0 005 11z" fill="#3ca450" /><path d="M8 8h7a7 7 0 01-8 7z" fill="#f5ca38" /><circle cx="8" cy="8" r="3" fill="#4286e8" stroke="#fff" /></> },
  { name: 'Slack', running: true, art: <><path d="M1 1h7v7H1z" fill="#52b994" /><path d="M8 1h7v7H8z" fill="#eba536" /><path d="M1 8h7v7H1z" fill="#68b9dc" /><path d="M8 8h7v7H8z" fill="#d24770" /><rect x="4" y="3" width="8" height="10" fill="#3b263e" /><text x="8" y="12" textAnchor="middle" fontSize="9" fontWeight="700" fill="#fff">S</text></> },
  { name: 'Word', running: true, art: <path d="M1 4l3-1 2 7 3-8 3 8 3-7-2 11-3 1-2-7-2 7-3-1z" fill="#2c8fd8" /> },
  { name: 'Sequel Pro', running: true, art: <><circle cx="8" cy="10" r="5" fill="#211c35" /><path d="M13 2l2 1-7 11-3-2z" fill="#e5b064" /><path d="M1 4l5-2 4 4-2 2z" fill="#a8a055" /></> },
  { name: 'Excel', running: true, art: <path d="M2 2h4l3 5 4-5h2l-4 7 4 6h-4l-3-4-4 4H1l5-7z" fill="#2c9b42" /> },
  { name: 'Skype', running: true, art: <><circle cx="8" cy="8" r="7" fill="#20b0ee" /><text x="8" y="12" textAnchor="middle" fontSize="12" fontWeight="700" fill="#fff">S</text></> },
  { name: 'After Effects', running: true, art: <><rect x="1" y="2" width="14" height="13" fill="#24073f" stroke="#8458b0" /><text x="8" y="12" textAnchor="middle" fontSize="9" fill="#d7a6ff">Ae</text></> },
  { name: 'Downloads', art: <><path d="M3 2h11l1 5H2z" fill="#c8b3a4" /><path d="M1 7h14v7H1z" fill="#a6b2a5" /><path d="M2 10h12M5 7v7M10 7v7" stroke="#eef0e8" /></> },
  { name: 'Trash', art: <><path d="M2 3h12l-2 12H4z" fill="#d8d8d8" /><ellipse cx="8" cy="3" rx="6" ry="2" fill="#f1f1f1" stroke="#999" /></> },
];

function Dock() {
  return (
    <nav aria-label="Dock" className="flex flex-1 items-start justify-center bg-[#090909] bg-[radial-gradient(ellipse,#111_30%,transparent_65%)] bg-[size:46px_23px]">
      <div className="flex h-[23px] bg-[#626166] px-px">
        {dock.map(app => (
          <button key={app.name} aria-label={app.name} className={`flex flex-col items-center pt-[2px] ${app.name === 'Downloads' ? 'ml-[6px] w-[17px]' : 'w-[17px] [&:nth-child(3n)]:w-4'}`}>
            <svg viewBox="0 0 16 16" className="size-4">{app.art}</svg>
            {app.running && <i className="mt-px size-[2px] rounded-full bg-black" />}
          </button>
        ))}
      </div>
    </nav>
  );
}

export default function App() {
  return (
    <div className="flex min-h-screen flex-col overflow-hidden bg-black font-['Open_Sans','Noto_Sans',sans-serif] text-[6px] leading-[9px] whitespace-nowrap">
      <MenuBar />
      <div className="mr-[3px] h-[9px] bg-linear-to-b from-[#ececee] to-[#cccccf] text-[#444]">
        <div className="grid grid-cols-[1fr_auto_1fr] items-center">
          <span className="flex gap-1 pl-[3px]">{[0, 1, 2].map(i => <i key={i} className="size-[6px] rounded-full bg-[#929294]" />)}</span>
          <span>Adobe After Effects CC 2015 - Untitled Project *</span>
        </div>
      </div>
      <div className="mr-[3px]"><Toolbar /></div>
      <main className="mr-[3px] flex border-b-2 border-black"><ProjectPanel /><CompositionPanel /><SidePanel /></main>
      <Timeline />
      <Dock />
    </div>
  );
}
